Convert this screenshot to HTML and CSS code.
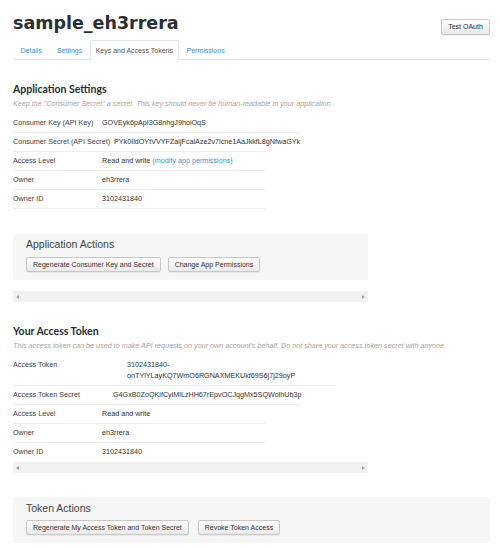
FILE: index.html
```html
<!DOCTYPE html>
<html>
<head>
<meta charset="utf-8">
<link rel="stylesheet" href="styles.css">
</head>
<body>
<div class="page">
  <div class="header">
    <h1 class="title">sample_eh3rrera</h1>
    <button class="btn btn-oauth">Test OAuth</button>
  </div>
  <ul class="tabs">
    <li class="tab"><a>Details</a></li>
    <li class="tab"><a>Settings</a></li>
    <li class="tab active"><a>Keys and Access Tokens</a></li>
    <li class="tab"><a>Permissions</a></li>
  </ul>

  <h2 class="section-title s1">Application Settings</h2>
  <p class="desc">Keep the "Consumer Secret" a secret. This key should never be human-readable in your application.</p>
  <div class="scroller sc1">
    <div class="row w300"><span class="label l89">Consumer Key (API Key)</span><span class="value">GOVEyk6pApI3G8nhgJ9hoiOqS</span></div>
    <div class="row w266"><span class="label l101">Consumer Secret (API Secret)</span><span class="value">PYk0IldOYtVVYFZaijFcalAze2v7lcne1AaJkkfL8gNfwaGYk</span></div>
    <div class="row w266"><span class="label l89">Access Level</span><span class="value">Read and write <a class="link">(modify app permissions)</a></span></div>
    <div class="row w266"><span class="label l89">Owner</span><span class="value">eh3rrera</span></div>
    <div class="row w266"><span class="label l89">Owner ID</span><span class="value">3102431840</span></div>

    <div class="actions narrow">
      <h3 class="actions-title">Application Actions</h3>
      <div class="btn-row">
        <button class="btn">Regenerate Consumer Key and Secret</button>
        <button class="btn">Change App Permissions</button>
      </div>
    </div>
    <div class="scrollbar sb1"><span class="arrow left"></span><span class="arrow right"></span></div>
  </div>

  <h2 class="section-title s2">Your Access Token</h2>
  <p class="desc">This access token can be used to make API requests on your own account's behalf. Do not share your access token secret with anyone.</p>
  <div class="scroller sc2">
    <div class="row w336 tall"><span class="label l114">Access Token</span><span class="value">3102431840-<br>onTYlYLayKQ7WmO6RGNAXMEKUkf69S6j7j29oyP</span></div>
    <div class="row w300"><span class="label l100">Access Token Secret</span><span class="value">G4GxB0ZoQKifCyiMlLzHH67rEpvOCJqgMx5SQWolhUb3p</span></div>
    <div class="row w266"><span class="label l89">Access Level</span><span class="value">Read and write</span></div>
    <div class="row w266"><span class="label l89">Owner</span><span class="value">eh3rrera</span></div>
    <div class="row w266 last"><span class="label l89">Owner ID</span><span class="value">3102431840</span></div>
    <div class="scrollbar"><span class="arrow left"></span><span class="arrow right"></span></div>
  </div>

  <div class="actions wide">
    <h3 class="actions-title">Token Actions</h3>
    <div class="btn-row">
      <button class="btn">Regenerate My Access Token and Token Secret</button>
      <button class="btn">Revoke Token Access</button>
    </div>
  </div>
</div>
</body>
</html>
```

FILE: styles.css
```css
html, body {
  margin: 0;
  padding: 0;
  background: #fff;
}
body {
  font-family: "Liberation Sans", Arial, sans-serif;
  font-size: 7.2px;
  color: #333;
}
.page {
  padding: 0 10px 0 13px;
}
.header {
  display: flex;
  justify-content: space-between;
  align-items: flex-start;
  height: 40px;
}
.title {
  margin: 12px 0 0 0;
  font-family: "DejaVu Sans", "Lato", sans-serif;
  font-weight: 700;
  font-size: 17.5px;
  line-height: 22px;
  color: #292f33;
  letter-spacing: 0;
}
.btn {
  font-family: "Liberation Sans", Arial, sans-serif;
  font-size: 7px;
  color: #333;
  background: linear-gradient(#ffffff, #e9e9e9);
  border: 1px solid #c8c8c8;
  border-radius: 2px;
  box-shadow: 0 1px 0 rgba(0,0,0,0.05);
  height: 16px;
  padding: 0 6px;
  margin: 0;
  line-height: 14px;
}
.btn-oauth {
  margin-top: 19px;
  width: 49px;
  padding: 0;
}
.tabs {
  display: flex;
  list-style: none;
  margin: 0;
  padding: 0;
  height: 19px;
  border-bottom: 1px solid #e1e8ed;
  font-size: 7px;
}
.tab {
  padding: 0 6.5px;
  height: 19px;
  line-height: 19px;
  box-sizing: border-box;
  border: 1px solid transparent;
  border-bottom: none;
}
.tab a {
  color: #3b94d9;
}
.tab.active {
  border-color: #e1e8ed;
  background: #fff;
  height: 20px;
  margin-bottom: -1px;
  padding: 0 5px;
  border-radius: 2px 2px 0 0;
}
.tab.active a {
  color: #555;
}
.section-title {
  font-family: "Lato", "Liberation Sans", sans-serif;
  font-weight: 700;
  font-size: 10.5px;
  line-height: 14px;
  color: #292f33;
  margin: 0;
}
.s1 { margin-top: 22px; }
.s2 { margin-top: 22px; }
.desc {
  margin: 3px 0 0 0;
  font-style: italic;
  color: #a6a6a6;
  line-height: 10px;
  font-size: 7.2px;
}
.sc1 { margin-top: 5px; }
.sc2 { margin-top: 4px; }
.row {
  display: flex;
  height: 18px;
  line-height: 18px;
  border-bottom: 1px solid #ecf0f2;
  white-space: nowrap;
}
.row.tall {
  height: auto;
  line-height: 11px;
  padding: 4px 0;
}
.row.last {
  border-bottom: none;
  height: 19px;
}
.w300 { width: 287px; }
.w266 { width: 253px; }
.w336 { width: 323px; }
.label {
  color: #444;
  flex: none;
}
.l89 { width: 89px; }
.l100 { width: 100px; }
.l101 { width: 101px; }
.l114 { width: 114px; }
.value {
  color: #333;
}
.link {
  color: #3b94d9;
}
.actions {
  background: #f6f6f6;
  border-radius: 2px;
  box-sizing: border-box;
  height: 46px;
  padding: 4px 13px 0;
}
.actions.narrow {
  width: 355px;
  margin-top: 25px;
}
.actions.wide {
  margin-top: 24px;
  padding-top: 5px;
}
.actions-title {
  margin: 0;
  font-weight: 400;
  font-size: 10.5px;
  line-height: 13px;
  color: #444;
}
.btn-row {
  display: flex;
  gap: 7px;
  margin-top: 6px;
}
.wide .btn-row {
  gap: 9px;
  margin-top: 5px;
}
.btn-row .btn {
  height: 15px;
  line-height: 13px;
}
.scrollbar {
  width: 355px;
  height: 11px;
  background: #f1f1f1;
  display: flex;
  justify-content: space-between;
  align-items: center;
  padding: 0 3px;
  box-sizing: border-box;
}
.sb1 { margin-top: 11px; }
.arrow {
  width: 0;
  height: 0;
  border-top: 2.5px solid transparent;
  border-bottom: 2.5px solid transparent;
}
.arrow.left { border-right: 3px solid #a3a3a3; }
.arrow.right { border-left: 3px solid #a3a3a3; }
```
